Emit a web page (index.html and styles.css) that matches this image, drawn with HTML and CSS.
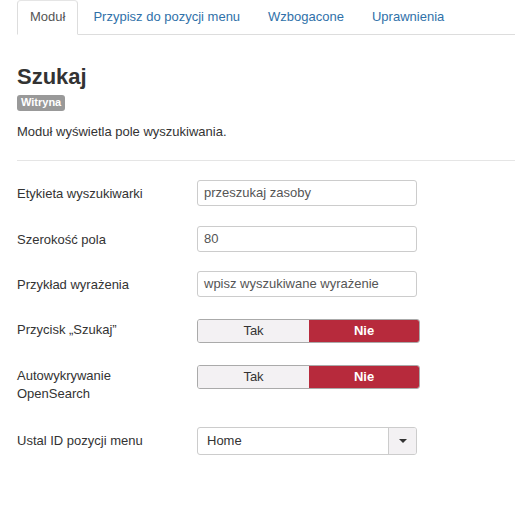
FILE: index.html
```html
<!DOCTYPE html>
<html lang="pl">
<head>
<meta charset="utf-8">
<link rel="stylesheet" href="styles.css">
</head>
<body>
<div class="page">
  <ul class="tabs">
    <li class="tab active"><a>Moduł</a></li>
    <li class="tab"><a>Przypisz do pozycji menu</a></li>
    <li class="tab"><a>Wzbogacone</a></li>
    <li class="tab"><a>Uprawnienia</a></li>
  </ul>
  <h2 class="title">Szukaj</h2>
  <span class="badge">Witryna</span>
  <p class="desc">Moduł wyświetla pole wyszukiwania.</p>
  <hr class="sep">
  <div class="form">
    <div class="row">
      <label class="label">Etykieta wyszukiwarki</label>
      <div class="control"><div class="input">przeszukaj zasoby</div></div>
    </div>
    <div class="row row-tight">
      <label class="label">Szerokość pola</label>
      <div class="control"><div class="input">80</div></div>
    </div>
    <div class="row row-last-input">
      <label class="label">Przykład wyrażenia</label>
      <div class="control"><div class="input">wpisz wyszukiwane wyrażenie</div></div>
    </div>
    <div class="row row-toggle">
      <label class="label">Przycisk „Szukaj”</label>
      <div class="control"><div class="toggle"><span class="opt">Tak</span><span class="opt on">Nie</span></div></div>
    </div>
    <div class="row row-toggle row-toggle-last">
      <label class="label">Autowykrywanie OpenSearch</label>
      <div class="control"><div class="toggle"><span class="opt">Tak</span><span class="opt on">Nie</span></div></div>
    </div>
    <div class="row">
      <label class="label">Ustal ID pozycji menu</label>
      <div class="control">
        <div class="select"><span class="sel-text">Home</span><span class="sel-btn"><svg width="8" height="4" viewBox="0 0 8 4"><path d="M0 0H8L4 4Z" fill="#333"/></svg></span></div>
      </div>
    </div>
  </div>
</div>
</body>
</html>
```
FILE: styles.css
```css
* { box-sizing: border-box; }
html, body { margin: 0; background: #fff; }
body {
  font-family: "Liberation Sans", Arial, sans-serif;
  font-size: 13px;
  line-height: 18px;
  color: #333;
}
.page { padding-left: 17px; }
.tabs {
  list-style: none;
  margin: 0;
  padding: 0;
  display: flex;
  border-bottom: 1px solid #ddd;
  height: 35px;
}
.tab { margin-right: 2px; margin-bottom: -1px; }
.tab a {
  display: block;
  padding: 7px 12px 8px;
  line-height: 18px;
  border: 1px solid transparent;
  border-radius: 4px 4px 0 0;
  color: #3071a9;
}
.tab.active a {
  color: #555;
  background: #fff;
  border-color: #ddd #ddd transparent;
  border-top-color: #e5e5e5;
}
.title {
  margin: 28px 0 4px;
  font-size: 22px;
  line-height: 28px;
  font-weight: bold;
  color: #333;
}
.badge {
  display: inline-block;
  background: #999;
  color: #fff;
  font-size: 11px;
  font-weight: bold;
  line-height: 13px;
  padding: 1px 4px 2px;
  border-radius: 3px;
  vertical-align: top;
}
.desc { margin: 10px 0 0; line-height: 18px; }
.sep {
  margin: 19px 0 0;
  border: 0;
  border-top: 1px solid #e5e5e5;
  height: 0;
}
.form { padding-top: 19px; }
.row { display: flex; margin-bottom: 20px; }
.row-tight { margin-bottom: 19px; }
.row-last-input { margin-bottom: 22px; }
.row-toggle { margin-bottom: 22px; }
.row-toggle-last { margin-bottom: 24px; }
.label {
  width: 180px;
  flex: none;
  padding-top: 5px;
  padding-right: 40px;
  line-height: 18px;
}
.row-toggle .label { padding-top: 2px; }
.control { flex: none; }
.input {
  width: 220px;
  height: 26px;
  border: 1px solid #ccc;
  border-radius: 3px;
  padding: 3px 6px;
  line-height: 18px;
  color: #555;
  font-size: 13px;
  background: #fff;
}
.toggle {
  display: flex;
  width: 223px;
  height: 24px;
  border: 1px solid #aaa;
  border-radius: 3px;
  overflow: hidden;
}
.opt {
  flex: none;
  width: 111px;
  text-align: center;
  line-height: 22px;
  background: #f3f1f3;
  color: #333;
}
.opt.on {
  flex: 1;
  background: #b72a3c;
  color: #fff;
  font-weight: bold;
}
.select {
  display: flex;
  width: 220px;
  height: 28px;
  border: 1px solid #ccc;
  border-radius: 3px;
  overflow: hidden;
}
.sel-text {
  flex: 1;
  padding: 0 9px;
  line-height: 26px;
  color: #333;
}
.sel-btn {
  flex: none;
  width: 28px;
  border-left: 1px solid #ccc;
  background: #f3f1f3;
  display: flex;
  align-items: center;
  justify-content: center;
}
```
